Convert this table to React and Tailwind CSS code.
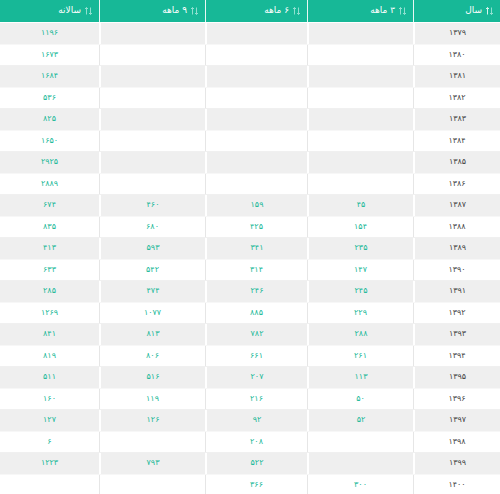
import React from "react";

const rows = [
  ["۱۳۷۹", "", "", "", "۱۱۹۶"],
  ["۱۳۸۰", "", "", "", "۱۶۷۳"],
  ["۱۳۸۱", "", "", "", "۱۶۸۴"],
  ["۱۳۸۲", "", "", "", "۵۳۶"],
  ["۱۳۸۳", "", "", "", "۸۲۵"],
  ["۱۳۸۴", "", "", "", "۱۶۵۰"],
  ["۱۳۸۵", "", "", "", "۲۹۲۵"],
  ["۱۳۸۶", "", "", "", "۲۸۸۹"],
  ["۱۳۸۷", "۴۵", "۱۵۹", "۴۶۰", "۶۷۴"],
  ["۱۳۸۸", "۱۵۴", "۴۲۵", "۶۸۰", "۸۳۵"],
  ["۱۳۸۹", "۲۳۵", "۳۴۱", "۵۹۳", "۴۱۳"],
  ["۱۳۹۰", "۱۴۷", "۳۱۴", "۵۴۲", "۶۳۳"],
  ["۱۳۹۱", "۲۴۵", "۲۴۶", "۴۷۴", "۲۸۵"],
  ["۱۳۹۲", "۲۲۹", "۸۸۵", "۱۰۷۷", "۱۲۶۹"],
  ["۱۳۹۳", "۲۸۸", "۷۸۲", "۸۱۳", "۸۴۱"],
  ["۱۳۹۴", "۲۶۱", "۶۶۱", "۸۰۶", "۸۱۹"],
  ["۱۳۹۵", "۱۱۳", "۲۰۷", "۵۱۶", "۵۱۱"],
  ["۱۳۹۶", "۵۰", "۲۱۶", "۱۱۹", "۱۶۰"],
  ["۱۳۹۷", "۵۲", "۹۲", "۱۲۶", "۱۲۷"],
  ["۱۳۹۸", "", "۲۰۸", "", "۶"],
  ["۱۳۹۹", "", "۵۲۲", "۷۹۳", "۱۲۲۳"],
  ["۱۴۰۰", "۳۰۰", "۳۶۶", "", ""],
];

const headers = ["سال", "۳ ماهه", "۶ ماهه", "۹ ماهه", "سالانه"];

function SortIcon({ active }) {
  return (
    <svg width="7" height="8" viewBox="0 0 7 8" className="shrink-0">
      <path d="M1.5 0.5 V7.5 M0 2 L1.5 0.5 L3 2" stroke={active ? "#d6f5ee" : "#8fe0d0"} strokeWidth="1" fill="none" />
      <path d="M5.5 0.5 V7.5 M4 6 L5.5 7.5 L7 6" stroke={active ? "#8fe0d0" : "#8fe0d0"} strokeWidth="1" fill="none" />
    </svg>
  );
}

const cols = "grid grid-cols-[87px_106px_102px_106px_99px]";

export default function App() {
  return (
    <div
      dir="rtl"
      className="w-[500px] h-[494px] overflow-hidden bg-white"
      style={{ fontFamily: '"DejaVu Sans", "Noto Sans", sans-serif' }}
    >
      <div className={`${cols} h-[22px] bg-[#17b897]`}>
        {headers.map((h, i) => (
          <div
            key={i}
            className={`flex items-center gap-[4px] pr-[7px] text-white text-[9px] ${i < 4 ? "border-l border-[#e9f7f4]" : ""}`}
          >
            <SortIcon active={i === 0} />
            <span>{h}</span>
          </div>
        ))}
      </div>
      <div className="h-[1px] bg-white" />
      {rows.map((r, ri) => {
        const gray = ri % 2 === 0;
        return (
          <div
            key={ri}
            className={`${cols} h-[21.5px] border-b ${gray ? "bg-[#efefef] border-[#f7f7f7]" : "bg-white border-[#f0f0f0]"}`}
          >
            {r.map((c, ci) => (
              <div
                key={ci}
                className={`flex items-center justify-center text-[8px] ${ci < 4 ? (gray ? "border-l-2 border-white" : "border-l border-[#e6e6e6]") : ""} ${ci === 0 ? "text-[#444]" : "text-[#17b897]"}`}
              >
                {c}
              </div>
            ))}
          </div>
        );
      })}
    </div>
  );
}
